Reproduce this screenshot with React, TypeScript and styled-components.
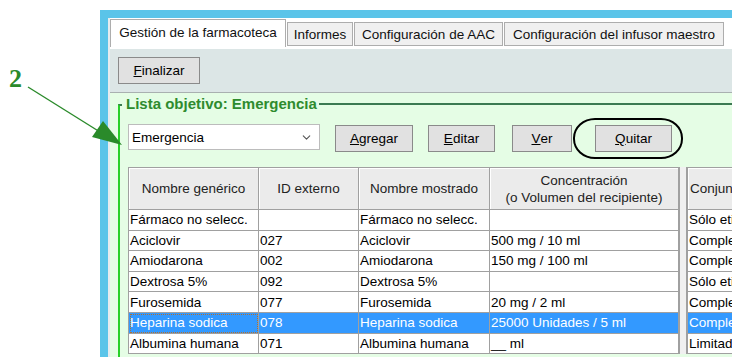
import React from 'react';
import styled, { createGlobalStyle } from 'styled-components';
import { ChevronDown } from 'lucide-react';

const GlobalStyle = createGlobalStyle`
  html, body {
    margin: 0;
    padding: 0;
    background: #ffffff;
    overflow: hidden;
  }
  body {
    font-family: "Liberation Sans", Arial, sans-serif;
    font-size: 13.5px;
    color: #000;
  }
`;

const Page = styled.div`
  position: relative;
  display: flex;
  width: 732px;
  height: 357px;
  overflow: hidden;
`;

const Margin = styled.div`
  flex: none;
  width: 100px;
  padding: 66px 0 0 9px;
  box-sizing: border-box;
`;

const Callout = styled.div`
  font-family: "Liberation Serif", "Times New Roman", serif;
  font-weight: bold;
  font-size: 26px;
  line-height: 26px;
  color: #2a8a2a;
`;

const Overlay = styled.svg`
  position: absolute;
  left: 0;
  top: 0;
  pointer-events: none;
`;

const Window = styled.div`
  flex: 1;
  min-width: 0;
  margin-top: 10px;
  border-top: 8px solid #5ac4e9;
  border-left: 8px solid #5ac4e9;
  background: #ffffff;
`;

const Inner = styled.div`
  border-left: 2px solid #e6ecee;
  width: 640px;
`;

const TabStrip = styled.div`
  display: flex;
  align-items: flex-start;
  gap: 1px;
  height: 31px;
  padding-top: 1px;
  box-sizing: border-box;
  background: #ffffff;
`;

const Tab = styled.div<{ $w: number; $active?: boolean }>`
  flex: none;
  width: ${(p) => p.$w}px;
  height: ${(p) => (p.$active ? 28 : 24)}px;
  margin-top: ${(p) => (p.$active ? 0 : 3)}px;
  box-sizing: border-box;
  border: 1px solid #adadad;
  border-bottom: ${(p) => (p.$active ? 'none' : '1px solid #adadad')};
  background: ${(p) => (p.$active ? '#ffffff' : '#f0f0f0')};
  display: flex;
  align-items: center;
  justify-content: center;
  padding-bottom: ${(p) => (p.$active ? 2 : 0)}px;
  white-space: nowrap;
  color: #111;
`;

const Toolbar = styled.div`
  height: 44px;
  box-sizing: border-box;
  background: #dce6e6;
  border-bottom: 1px solid #a9b0b0;
  padding: 8px 0 0 8px;
`;

const Button = styled.button<{ $w: number; $ml?: number }>`
  flex: none;
  width: ${(p) => p.$w}px;
  height: 27px;
  margin-left: ${(p) => p.$ml ?? 0}px;
  box-sizing: border-box;
  background: #e1e1e1;
  border: 1px solid #8a8a8a;
  border-radius: 0;
  font-family: "Liberation Sans", Arial, sans-serif;
  font-size: 13.5px;
  color: #000;
  padding: 0;
  display: flex;
  align-items: center;
  justify-content: center;
`;

const GreenArea = styled.div`
  background: #e5fde5;
  padding: 3px 0 0 8px;
  height: 270px;
`;

const TitleRow = styled.div`
  display: flex;
  align-items: center;
  height: 16px;
`;

const Corner = styled.div`
  flex: none;
  align-self: flex-end;
  width: 4px;
  height: 8px;
  margin-right: 4px;
  border-top: 2px solid #3b7a52;
  border-left: 2px solid #28d028;
  box-sizing: border-box;
`;

const Title = styled.div`
  flex: none;
  font-weight: bold;
  font-size: 15px;
  line-height: 16px;
  color: #2e8b2e;
`;

const TitleLine = styled.div`
  flex: 1;
  height: 0;
  margin-left: 2px;
  border-top: 2px solid #3b7a52;
`;

const GroupBody = styled.div`
  border-left: 2px solid #28d028;
  padding: 13px 0 0 8px;
  height: 260px;
`;

const ControlRow = styled.div`
  display: flex;
  align-items: flex-start;
  height: 27px;
`;

const Combo = styled.div`
  flex: none;
  width: 192px;
  height: 26px;
  margin-top: -1px;
  box-sizing: border-box;
  background: #ffffff;
  border: 1px solid #bcbcbc;
  display: flex;
  align-items: center;
  justify-content: space-between;
  padding: 0 6px 0 3px;
  color: #000;
`;

const Highlight = styled.div`
  position: relative;
  flex: none;
  margin-left: 23px;
`;

const Ring = styled.div`
  position: absolute;
  left: -22px;
  top: -7px;
  width: 110px;
  height: 41px;
  box-sizing: border-box;
  border: 2px solid #000;
  border-radius: 22px / 20px;
  pointer-events: none;
`;

const TableWrap = styled.div`
  display: flex;
  margin-top: 15px;
`;

const Grid = styled.div<{ $cols: string }>`
  flex: none;
  display: grid;
  grid-template-columns: ${(p) => p.$cols};
  grid-auto-rows: 20.6px;
  grid-template-rows: 42px;
  border-top: 1px solid #a0a0a0;
  border-left: 1px solid #a0a0a0;
  background: #ffffff;
`;

const HeadCell = styled.div`
  box-sizing: border-box;
  border-right: 1px solid #a0a0a0;
  border-bottom: 1px solid #a0a0a0;
  background: #ebebeb;
  box-shadow: inset 1px 1px 0 #ffffff;
  display: flex;
  align-items: center;
  justify-content: center;
  text-align: center;
  line-height: 17px;
  color: #222;
  white-space: nowrap;
  overflow: hidden;
`;

const Cell = styled.div<{ $sel?: boolean; $focus?: boolean }>`
  box-sizing: border-box;
  border-right: 1px solid #a0a0a0;
  border-bottom: 1px solid #a0a0a0;
  background: ${(p) => (p.$sel ? '#3399ff' : '#ffffff')};
  color: ${(p) => (p.$sel ? '#ffffff' : '#000')};
  outline: ${(p) => (p.$focus ? '1px dotted #b07030' : 'none')};
  outline-offset: -2px;
  display: flex;
  align-items: center;
  padding-left: 1px;
  white-space: nowrap;
  overflow: hidden;
`;

const Splitter = styled.div`
  flex: none;
  width: 8px;
  box-sizing: border-box;
  background: #f0f0f0;
  border-left: 1px solid #a0a0a0;
  border-right: 1px solid #a0a0a0;
`;

const tabs = [
  { label: 'Gestión de la farmacoteca', w: 176, active: true },
  { label: 'Informes', w: 66 },
  { label: 'Configuración de AAC', w: 149 },
  { label: 'Configuración del infusor maestro', w: 220 },
];

const headers = ['Nombre genérico', 'ID externo', 'Nombre mostrado'];

const rows = [
  ['Fármaco no selecc.', '', 'Fármaco no selecc.', '', 'Sólo etiqueta'],
  ['Aciclovir', '027', 'Aciclovir', '500 mg / 10 ml', 'Completo'],
  ['Amiodarona', '002', 'Amiodarona', '150 mg / 100 ml', 'Completo'],
  ['Dextrosa 5%', '092', 'Dextrosa 5%', '', 'Sólo etiqueta'],
  ['Furosemida', '077', 'Furosemida', '20 mg / 2 ml', 'Completo'],
  ['Heparina sodica', '078', 'Heparina sodica', '25000 Unidades / 5 ml', 'Completo'],
  ['Albumina humana', '071', 'Albumina humana', '__ ml', 'Limitado'],
];

const SELECTED = 5;

export default function App() {
  return (
    <>
      <GlobalStyle />
      <Page>
        <Margin>
          <Callout>2</Callout>
        </Margin>
        <Window>
          <Inner>
            <TabStrip>
              {tabs.map((t) => (
                <Tab key={t.label} $w={t.w} $active={t.active}>
                  {t.label}
                </Tab>
              ))}
            </TabStrip>
            <Toolbar>
              <Button $w={82}>
                <u>F</u>inalizar
              </Button>
            </Toolbar>
            <GreenArea>
              <TitleRow>
                <Corner />
                <Title>Lista objetivo: Emergencia</Title>
                <TitleLine />
              </TitleRow>
              <GroupBody>
                <ControlRow>
                  <Combo>
                    <span>Emergencia</span>
                    <ChevronDown size={13} strokeWidth={2} color="#555" />
                  </Combo>
                  <Button $w={78} $ml={15}>
                    <u>A</u>gregar
                  </Button>
                  <Button $w={67} $ml={15}>
                    <u>E</u>ditar
                  </Button>
                  <Button $w={60} $ml={17}>
                    <u>V</u>er
                  </Button>
                  <Highlight>
                    <Button $w={77}>
                      <u>Q</u>uitar
                    </Button>
                    <Ring />
                  </Highlight>
                </ControlRow>
                <TableWrap>
                  <Grid $cols="130px 100px 131px 189px">
                    {headers.map((h) => (
                      <HeadCell key={h}>{h}</HeadCell>
                    ))}
                    <HeadCell>
                      Concentración
                      <br />
                      (o Volumen del recipiente)
                    </HeadCell>
                    {rows.map((r, i) =>
                      r.slice(0, 4).map((v, j) => (
                        <Cell key={`${i}-${j}`} $sel={i === SELECTED} $focus={i === SELECTED && j === 0}>
                          {v}
                        </Cell>
                      ))
                    )}
                  </Grid>
                  <Splitter />
                  <Grid $cols="120px">
                    <HeadCell style={{ justifyContent: 'flex-start', paddingLeft: 2 }}>Conjunto de reglas</HeadCell>
                    {rows.map((r, i) => (
                      <Cell key={i} $sel={i === SELECTED}>
                        {r[4]}
                      </Cell>
                    ))}
                  </Grid>
                </TableWrap>
              </GroupBody>
            </GreenArea>
          </Inner>
        </Window>
        <Overlay width={732} height={357} viewBox="0 0 732 357">
          <line x1={28} y1={87} x2={100} y2={132} stroke="#2a8a2a" strokeWidth={1.4} />
          <polygon points="122,145 92,137 103,121" fill="#2a8a2a" />
        </Overlay>
      </Page>
    </>
  );
}
